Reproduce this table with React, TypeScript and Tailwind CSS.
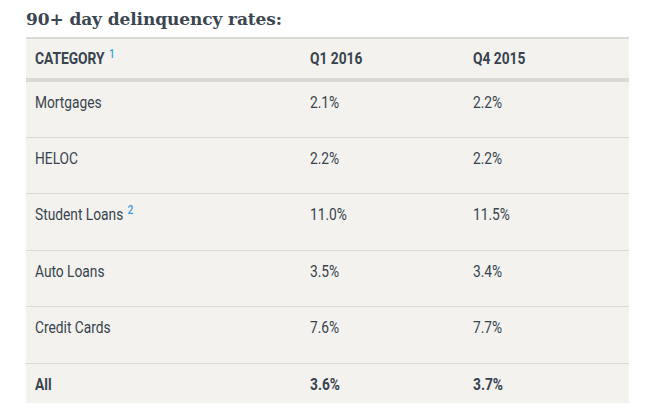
const rows = [
  { name: "Mortgages", q1: "2.1%", q4: "2.2%", h: "h-[56px]" },
  { name: "HELOC", q1: "2.2%", q4: "2.2%", h: "h-[56px]" },
  { name: "Student Loans", note: "2", q1: "11.0%", q4: "11.5%", h: "h-[57px]" },
  { name: "Auto Loans", q1: "3.5%", q4: "3.4%", h: "h-[56px]" },
  { name: "Credit Cards", q1: "7.6%", q4: "7.7%", h: "h-[57px]" },
];

// condensed look: Roboto squeezed horizontally
function Txt({ children }: { children: React.ReactNode }) {
  return <span className="inline-block origin-left scale-x-[0.86] whitespace-nowrap">{children}</span>;
}

function Note({ n }: { n: string }) {
  return (
    <span className="relative -top-[6px] ml-[5px] inline-block text-[12px] leading-none font-medium text-[#3aa0dc]">
      {n}
    </span>
  );
}

export default function App() {
  return (
    <div className="min-h-[418px] w-[650px] bg-white pl-[26px] pt-[6px]">
      <h2 className="font-['DejaVu_Serif',Georgia,serif] text-[17px] font-bold leading-[26px] tracking-[-0.1px] text-[#3b4650]">
        90+ day delinquency rates:
      </h2>
      <div className="mt-[5px] w-[603px] border-t-2 border-[#dcdad5] bg-[#f4f2ee] font-['Roboto',sans-serif] text-[16px] leading-[18px] text-[#38444f]">
        <div className="grid h-[43px] grid-cols-[275px_163px_165px] items-center border-b-4 border-[#dcdad5] font-bold uppercase">
          <div className="pl-[9px]">
            <Txt>
              Category<Note n="1" />
            </Txt>
          </div>
          <div className="pl-[9px]">
            <Txt>Q1 2016</Txt>
          </div>
          <div className="pl-[9px]">
            <Txt>Q4 2015</Txt>
          </div>
        </div>
        {rows.map((r) => (
          <div key={r.name} className={`grid ${r.h} grid-cols-[275px_163px_165px] border-b border-[#dcdad5] pt-[12px]`}>
            <div className="pl-[9px]">
              <Txt>
                {r.name}
                {r.note && <Note n={r.note} />}
              </Txt>
            </div>
            <div className="pl-[9px]">
              <Txt>{r.q1}</Txt>
            </div>
            <div className="pl-[9px]">
              <Txt>{r.q4}</Txt>
            </div>
          </div>
        ))}
        <div className="grid h-[39px] grid-cols-[275px_163px_165px] pt-[12px] font-bold">
          <div className="pl-[9px]">
            <Txt>All</Txt>
          </div>
          <div className="pl-[9px]">
            <Txt>3.6%</Txt>
          </div>
          <div className="pl-[9px]">
            <Txt>3.7%</Txt>
          </div>
        </div>
      </div>
    </div>
  );
}
